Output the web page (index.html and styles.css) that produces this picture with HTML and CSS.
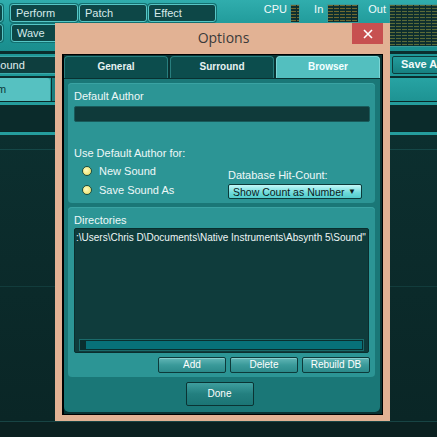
FILE: index.html
```html
<!DOCTYPE html>
<html>
<head>
<meta charset="utf-8">
<link rel="stylesheet" href="styles.css">
</head>
<body>
<div class="app">
  <div class="topbar">
    <div class="topleft">
      <div class="row">
        <div class="tbtn stub"></div>
        <div class="tbtn first">Perform</div>
        <div class="tbtn">Patch</div>
        <div class="tbtn">Effect</div>
      </div>
      <div class="row">
        <div class="tbtn stub"></div>
        <div class="tbtn first wave">Wave</div>
      </div>
    </div>
    <div class="meters">
      <span class="mlabel cpu">CPU</span>
      <div class="meter m-cpu"></div>
      <span class="mlabel in">In</span>
      <div class="meter m-in"></div>
      <span class="mlabel out">Out</span>
      <div class="meter m-out"></div>
    </div>
  </div>
  <div class="gap-dark"></div>
  <div class="strip1">
    <div class="sound-box">Sound</div>
    <div class="saveas">Save As</div>
  </div>
  <div class="gap-dark2"></div>
  <div class="strip2">
    <div class="ltab">Perform</div>
    <div class="ltab2"></div>
  </div>
  <div class="tealline"></div>
  <div class="darkband"></div>
  <div class="tealline"></div>
  <div class="main">
    <div class="zone z1"></div>
    <div class="zone z2"></div>
    <div class="zone z3"></div>
  </div>
  <div class="footer"></div>
</div>

<div class="dialog">
  <div class="titlebar">
    <span></span>
    <span class="title">Options</span>
    <div class="close"><svg width="10" height="10" viewBox="0 0 10 10"><path d="M1 1 L9 9 M9 1 L1 9" stroke="#fff" stroke-width="1.6" fill="none"/></svg></div>
  </div>
  <div class="client">
    <div class="tabs">
      <div class="tab">General</div>
      <div class="tab">Surround</div>
      <div class="tab active">Browser</div>
    </div>
    <div class="panel">
      <div class="section s1">
        <div class="label">Default Author</div>
        <div class="input"></div>
        <div class="label use">Use Default Author for:</div>
        <div class="opts">
          <div class="radios">
            <div class="radio-row"><span class="radio"></span><span class="label">New Sound</span></div>
            <div class="radio-row"><span class="radio"></span><span class="label">Save Sound As</span></div>
          </div>
          <div class="hitcount">
            <div class="label">Database Hit-Count:</div>
            <div class="select"><span>Show Count as Number</span><span class="arrow">&#9660;</span></div>
          </div>
        </div>
      </div>
      <div class="section s2">
        <div class="label">Directories</div>
        <div class="list">
          <div class="path">:\Users\Chris D\Documents\Native Instruments\Absynth 5\Sound"</div>
          <div class="hscroll"><div class="thumb"></div></div>
        </div>
        <div class="btnrow">
          <div class="btn">Add</div>
          <div class="btn">Delete</div>
          <div class="btn">Rebuild DB</div>
        </div>
      </div>
      <div class="donerow"><div class="done">Done</div></div>
    </div>
  </div>
</div>
</body>
</html>
```
FILE: styles.css
```css
html, body {
  margin: 0;
  padding: 0;
}
body {
  width: 437px;
  height: 437px;
  overflow: hidden;
  position: relative;
  background: #0a2828;
  font-family: "Liberation Sans", Arial, sans-serif;
}
.app {
  display: flex;
  flex-direction: column;
  height: 437px;
}
.topbar {
  height: 51px;
  flex: none;
  display: flex;
  background: linear-gradient(#30adad, #1d9696 60%, #1a8e8e);
}
.topleft {
  display: flex;
  flex-direction: column;
  gap: 2px;
  padding-top: 4px;
}
.row {
  display: flex;
  gap: 1px;
}
.tbtn {
  box-sizing: border-box;
  height: 18px;
  width: 68px;
  border: 1px solid #56c6c6;
  border-radius: 3px;
  background: #0d4747;
  color: #d6eaea;
  font-size: 11px;
  line-height: 16px;
  padding-left: 5px;
  box-shadow: 0 0 0 1px #137070;
}
.tbtn.stub {
  width: 8px;
  margin-left: -5px;
}
.tbtn.first {
  margin-left: 6px;
}
.tbtn.wave {
  margin-left: 7px;
  width: 70px;
}
.meters {
  display: flex;
  align-items: flex-start;
  margin-left: auto;
  padding-top: 3px;
}
.mlabel {
  color: #f2fafa;
  font-size: 11px;
  line-height: 13px;
}
.cpu { margin-right: 3px; }
.in { margin-left: 14px; margin-right: 4px; }
.out { margin-left: 9px; margin-right: 3px; }
.meter {
  margin-top: 1px;
  background:
    repeating-linear-gradient(to right, transparent 0 5px, #0b2c2c 5px 6px),
    repeating-linear-gradient(to bottom, #6f6a30 0 1px, #10302f 1px 3px);
  border: 1px solid #3a9a9a;
  box-sizing: border-box;
}
.m-cpu { width: 10px; height: 19px; }
.m-in { width: 32px; height: 19px; }
.m-out {
  width: 48px;
  height: 43px;
  border-right: none;
  background:
    repeating-linear-gradient(to right, transparent 0 5px, #0b2c2c 5px 6px),
    repeating-linear-gradient(to bottom, #5a6a38 0 1px, #10302f 1px 3px);
}

.gap-dark {
  height: 3px;
  background: #0b2e2e;
}
.strip1 {
  height: 22px;
  box-sizing: border-box;
  padding: 2px 0;
  background: #1f9797;
  display: flex;
  justify-content: space-between;
}
.sound-box {
  margin-left: -14px;
  width: 68px;
  background: #0e3e3e;
  border: 1px solid #3aa8a8;
  border-radius: 2px;
  color: #e0eeee;
  font-size: 11px;
  line-height: 16px;
  padding-left: 6px;
}
.saveas {
  width: 55px;
  margin-right: -10px;
  box-sizing: border-box;
  background: linear-gradient(#239c9c, #168080);
  border: 1px solid #0c3b3b;
  border-radius: 2px;
  color: #f2fafa;
  font-size: 11px;
  font-weight: bold;
  line-height: 15px;
  padding-left: 8px;
}
.gap-dark2 {
  height: 2px;
  background: #0b2e2e;
}
.strip2 {
  height: 23px;
  display: flex;
  background: linear-gradient(#27a3a3, #1e9393);
}
.ltab {
  width: 50px;
  background: #56c1c1;
  border-radius: 0 3px 0 0;
  color: #0d3a3a;
  font-size: 11px;
  line-height: 22px;
  text-indent: -33px;
  overflow: hidden;
  white-space: nowrap;
}
.ltab2 {
  width: 12px;
  margin-left: 1px;
  background: #1b7e7e;
  border-left: 1px solid #0b2e2e;
}
.tealline {
  height: 3px;
  margin-top: 1px;
  background: #259d9d;
}
.darkband {
  height: 26px;
  background: #0b2b2b;
}
.main {
  flex: 1;
  display: flex;
  flex-direction: column;
  background: linear-gradient(#0c2f2f, #0a2626);
}
.zone {
  border-top: 1px solid #154747;
}
.z1 { height: 14px; border-top: none; }
.z2 { height: 136px; }
.z3 { flex: 1; border-top-color: #123c3c; }
.footer {
  height: 15px;
  background: #0b2121;
  border-top: 1px solid #184444;
}

/* dialog */
.dialog {
  position: absolute;
  left: 55px;
  top: 23px;
  width: 335px;
  height: 398px;
  box-sizing: border-box;
  padding: 0 7px 6px 7px;
  background: #e2b294;
  display: flex;
  flex-direction: column;
}
.titlebar {
  height: 31px;
  flex: none;
  display: grid;
  grid-template-columns: 1fr auto 1fr;
}
.title {
  font-family: "Open Sans", "Noto Sans", sans-serif;
  font-size: 14px;
  color: #3a3a3a;
  line-height: 30px;
  padding-left: 2px;
}
.close {
  justify-self: end;
  align-self: start;
  width: 31px;
  height: 21px;
  background: #c75050;
  display: flex;
  align-items: center;
  justify-content: center;
}
.client {
  flex: 1;
  border: 1px solid #000;
  border-left-width: 2px;
  background: #093232;
  padding: 1px 2px 2px 0;
  display: flex;
  flex-direction: column;
}
.tabs {
  display: flex;
  gap: 2px;
  height: 22px;
  flex: none;
}
.tab {
  flex: 1;
  box-sizing: border-box;
  background: #0c4d4d;
  border: 1px solid #287e7e;
  border-bottom: none;
  border-radius: 4px 4px 0 0;
  color: #e6f2f2;
  font-size: 10px;
  font-weight: bold;
  text-align: center;
  line-height: 20px;
}
.tab.active {
  background: #53bfbf;
  border-color: #7dd6d6;
  color: #f4ffff;
}
.panel {
  flex: 1;
  margin-top: 1px;
  background: #1a7777;
  border-radius: 0 0 5px 5px;
  padding: 4px 5px 0 4px;
  display: flex;
  flex-direction: column;
}
.section {
  background: #2c9595;
  border-radius: 4px;
  box-sizing: border-box;
  box-shadow: inset 0 1px 0 #3aa3a3;
}
.s1 {
  height: 120px;
  padding: 7px 5px 0 6px;
}
.s2 {
  height: 170px;
  margin-top: 4px;
  padding: 7px 6px 0 6px;
  display: flex;
  flex-direction: column;
}
.label {
  color: #eef8f8;
  font-size: 11px;
  line-height: 12px;
  white-space: nowrap;
}
.input {
  margin-top: 4px;
  height: 16px;
  box-sizing: border-box;
  background: #0f3a3a;
  border: 1px solid #195a5a;
  border-radius: 2px;
}
.label.use {
  margin-top: 25px;
}
.opts {
  display: grid;
  grid-template-columns: 154px 1fr;
  margin-top: 2px;
}
.radios {
  padding-left: 8px;
}
.radio-row {
  height: 19px;
  display: flex;
  align-items: center;
}
.radio {
  width: 10px;
  height: 10px;
  box-sizing: border-box;
  border-radius: 50%;
  background: radial-gradient(circle at 40% 40%, #fffcc0, #eee679 70%, #c8c050);
  border: 1px solid #1e4e40;
  margin-right: 7px;
}
.hitcount {
  padding-top: 8px;
}
.select {
  margin-top: 3px;
  width: 134px;
  height: 15px;
  box-sizing: border-box;
  border: 1px solid #0c3a3a;
  border-radius: 2px;
  background: linear-gradient(#c4f8f8, #6edada 60%, #52cccc);
  display: flex;
  justify-content: space-between;
  align-items: center;
  padding: 0 5px 0 4px;
  font-size: 10.5px;
  color: #0a1a1a;
}
.arrow {
  font-size: 8px;
}
.list {
  margin-top: 2px;
  height: 125px;
  box-sizing: border-box;
  background: #0f3c3c;
  border: 1px solid #0a2e2e;
  border-radius: 2px;
  display: flex;
  flex-direction: column;
}
.path {
  padding: 3px 0 0 1px;
  color: #eef6f6;
  font-size: 10px;
  line-height: 12px;
  white-space: nowrap;
  overflow: hidden;
}
.hscroll {
  margin: auto 4px 1px 4px;
  height: 12px;
  box-sizing: border-box;
  border: 1px solid #1a6a6a;
  background: #0a2f2f;
  padding: 1px 1px 1px 6px;
}
.thumb {
  height: 100%;
  background: #077179;
}
.btnrow {
  margin-top: 4px;
  margin-right: -1px;
  display: flex;
  justify-content: flex-end;
  gap: 4px;
}
.btn, .done {
  width: 68px;
  box-sizing: border-box;
  border: 1px solid #0d3a3a;
  border-radius: 2px;
  color: #fff;
  font-size: 10px;
  text-align: center;
}
.btn {
  height: 16px;
  line-height: 14px;
  background: linear-gradient(#62b6b6, #3a9a9a 50%, #2b8a8a);
  box-shadow: inset 0 1px 0 #86cccc;
}
.donerow {
  margin-top: 5px;
  display: flex;
  justify-content: center;
  padding-right: 4px;
}
.done {
  height: 24px;
  line-height: 22px;
  background: linear-gradient(#3e9e9e, #237f7f 50%, #1b7575);
  border-color: #0a3333;
}
```
